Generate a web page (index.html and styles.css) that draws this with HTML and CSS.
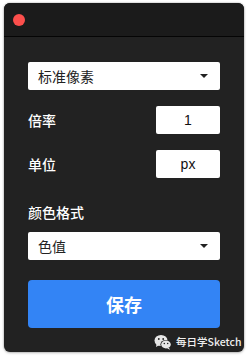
FILE: index.html
```html
<!DOCTYPE html>
<html>
<head>
<meta charset="utf-8">
<link rel="stylesheet" href="styles.css">
</head>
<body>
<div class="window">
  <div class="titlebar"><span class="dot"></span></div>
  <div class="content">
    <div class="select select-first"><span>标准像素</span><span class="caret"></span></div>
    <div class="row row-first"><span class="label">倍率</span><div class="input">1</div></div>
    <div class="row"><span class="label">单位</span><div class="input">px</div></div>
    <div class="label label-block">颜色格式</div>
    <div class="select"><span>色值</span><span class="caret"></span></div>
    <div class="button">保存</div>
  </div>
</div>
<div class="watermark">
  <svg class="wx" width="18" height="16" viewBox="0 0 18 16">
    <ellipse cx="7" cy="6.5" rx="6.5" ry="5.5" fill="#e6e6e6"/>
    <path d="M2.5 10 L2 13 L5 11.3 Z" fill="#e6e6e6"/>
    <circle cx="4.8" cy="5" r="0.9" fill="#222"/>
    <circle cx="9.2" cy="5" r="0.9" fill="#222"/>
    <ellipse cx="12" cy="10.5" rx="5.6" ry="4.6" fill="#222"/>
    <ellipse cx="12" cy="10.5" rx="4.8" ry="3.9" fill="#e6e6e6"/>
    <path d="M14.8 13.5 L16 15.8 L13 14.2 Z" fill="#e6e6e6"/>
    <circle cx="10.3" cy="9.5" r="0.75" fill="#222"/>
    <circle cx="13.7" cy="9.5" r="0.75" fill="#222"/>
  </svg>
  <span class="wm-text">每日学Sketch</span>
</div>
</body>
</html>
```
FILE: styles.css
```css
html, body {
  margin: 0;
  padding: 0;
  background: #ffffff;
}
body {
  width: 248px;
  height: 356px;
  position: relative;
  overflow: hidden;
  font-family: "Noto Sans CJK SC", "Liberation Sans", sans-serif;
}
.window {
  position: relative;
  margin: 3px 4px 0 4px;
  width: 240px;
  height: 349px;
  border-radius: 6px;
  background: #222222;
  box-shadow: 0 0 2px rgba(0,0,0,0.35), 0 1px 3px rgba(0,0,0,0.2);
  overflow: hidden;
}
.titlebar {
  height: 33px;
  background: #1b1b1b;
  border-bottom: 1px solid #050505;
  display: flex;
  align-items: center;
  padding-left: 9px;
}
.dot {
  width: 12px;
  height: 12px;
  border-radius: 50%;
  background: #fc4f4c;
  margin-top: 1px;
}
.content {
  padding: 25px 24px 0 24px;
  display: flex;
  flex-direction: column;
}
.select {
  height: 28px;
  background: #ffffff;
  border-radius: 2px;
  display: flex;
  align-items: center;
  justify-content: space-between;
  padding: 0 12px 0 10px;
  font-size: 14px;
  color: #222;
}
.caret {
  width: 0;
  height: 0;
  border-left: 4.5px solid transparent;
  border-right: 4.5px solid transparent;
  border-top: 4px solid #222;
}
.row {
  margin-top: 16px;
  height: 28px;
  display: flex;
  align-items: center;
  justify-content: space-between;
}
.label {
  color: #ffffff;
  font-size: 14px;
  font-weight: 500;
  line-height: 20px;
}
.input {
  width: 64px;
  height: 28px;
  background: #ffffff;
  border-radius: 2px;
  display: flex;
  align-items: center;
  justify-content: center;
  font-family: "Liberation Sans", sans-serif;
  font-size: 14px;
  color: #111;
}
.label-block {
  margin-top: 24px;
  margin-bottom: 10px;
}
.button {
  margin-top: 20px;
  height: 48px;
  border-radius: 4px;
  background: #3384f5;
  color: #ffffff;
  font-size: 18px;
  font-weight: 700;
  display: flex;
  align-items: center;
  justify-content: center;
}
.watermark {
  position: absolute;
  left: 154px;
  top: 334px;
  display: flex;
  align-items: center;
  gap: 4px;
  color: #f0f0f0;
  font-size: 10.5px;
  line-height: 16px;
  white-space: nowrap;
}
.wm-text {
  font-weight: 500;
}
.wx {
  display: block;
  flex: none;
}
```
